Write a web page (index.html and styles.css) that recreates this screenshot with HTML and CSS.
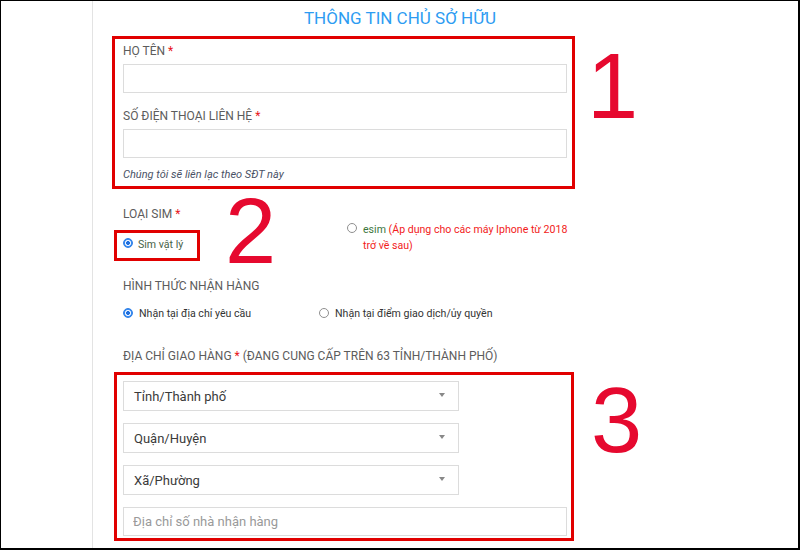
FILE: index.html
```html
<!DOCTYPE html>
<html lang="vi">
<head>
<meta charset="utf-8">
<title>Thông tin chủ sở hữu</title>
<link rel="stylesheet" href="styles.css">
</head>
<body>
<div class="frame">
  <aside class="side"></aside>
  <main class="main">
    <h1 class="title">THÔNG TIN CHỦ SỞ HỮU</h1>

    <div class="mark mark-1">
      <label class="label">HỌ TÊN <span class="req">*</span></label>
      <input class="input input-first" type="text">
      <label class="label label-gap">SỐ ĐIỆN THOẠI LIÊN HỆ <span class="req">*</span></label>
      <input class="input input-first" type="text">
      <p class="hint">Chúng tôi sẽ liên lạc theo SĐT này</p>
    </div>

    <div class="section">
      <div class="label">LOẠI SIM <span class="req">*</span></div>
    </div>
    <div class="sim-row">
      <div class="mark mark-2">
        <span class="radio checked"></span>
        <span class="opt opt-green">Sim vật lý</span>
      </div>
      <div class="esim">
        <span class="radio"></span>
        <p class="opt esim-text"><span class="green">esim</span> <span class="red">(Áp dụng cho các máy Iphone từ 2018 trở về sau)</span></p>
      </div>
    </div>

    <div class="section section-gap">
      <div class="label">HÌNH THỨC NHẬN HÀNG</div>
    </div>
    <div class="recv-row">
      <div class="recv">
        <span class="radio checked"></span>
        <span class="opt">Nhận tại địa chỉ yêu cầu</span>
      </div>
      <div class="recv">
        <span class="radio"></span>
        <span class="opt">Nhận tại điểm giao dịch/ủy quyền</span>
      </div>
    </div>

    <div class="section addr-label">
      <div class="label">ĐỊA CHỈ GIAO HÀNG <span class="req">*</span> (ĐANG CUNG CẤP TRÊN 63 TỈNH/THÀNH PHỐ)</div>
    </div>

    <div class="mark mark-3">
      <div class="select"><span>Tỉnh/Thành phố</span><i class="caret"></i></div>
      <div class="select"><span>Quận/Huyện</span><i class="caret"></i></div>
      <div class="select"><span>Xã/Phường</span><i class="caret"></i></div>
      <input class="input input-addr" type="text" placeholder="Địa chỉ số nhà nhận hàng">
    </div>
  </main>

  <span class="num num-1">1</span>
  <span class="num num-2">2</span>
  <span class="num num-3">3</span>
</div>
</body>
</html>
```

FILE: styles.css
```css
* { box-sizing: border-box; }

html, body {
  margin: 0;
  padding: 0;
  background: #fff;
}

body {
  font-family: Roboto, "Noto Sans", Arial, sans-serif;
  color: #333;
}

.frame {
  position: relative;
  width: 800px;
  height: 550px;
  border-style: solid;
  border-color: #000;
  border-width: 1px 2px 2px 1px;
  display: flex;
  overflow: hidden;
  background: #fff;
}

.side {
  width: 92px;
  flex: none;
  border-right: 1px solid #e3e3e3;
}

.main {
  flex: 1;
  padding: 7px 0 0 19px;
  display: flex;
  flex-direction: column;
  align-items: flex-start;
}

.title {
  width: 576px;
  margin: 0;
  text-align: center;
  font-size: 17px;
  line-height: 20px;
  font-weight: 400;
  color: #2d9cf2;
}

.mark {
  border: 3px solid #e10000;
}

.mark-1 {
  width: 463px;
  margin-top: 8px;
  padding: 4px 0 4px 8px;
  display: flex;
  flex-direction: column;
}

.label {
  display: block;
  font-size: 12px;
  line-height: 16px;
  color: #5c5c5c;
  text-transform: uppercase;
  white-space: nowrap;
}

.label-gap { margin-top: 15px; }

.req { color: #e8141b; }

.input {
  display: block;
  height: 29px;
  margin: 0;
  padding: 0 9px;
  border: 1px solid #dcdcdc;
  border-radius: 0;
  background: #fff;
  font-family: inherit;
  font-size: 13px;
  color: #333;
  outline: none;
}

.input-first {
  width: 444px;
  margin-top: 5px;
}

.input::placeholder { color: #9a9a9a; }

.hint {
  margin: 10px 0 0;
  font-size: 11px;
  line-height: 14px;
  font-style: italic;
  color: #4a5266;
}

.section {
  margin-top: 17px;
  padding-left: 11px;
}

.sim-row {
  display: grid;
  grid-template-columns: 235px auto;
  align-items: start;
}

.mark-2 {
  width: 86px;
  margin: 8px 0 0 2px;
  padding: 4px 0 5px 6px;
  display: flex;
  align-items: flex-start;
  gap: 5px;
}

.radio {
  flex: none;
  width: 10px;
  height: 10px;
  margin-top: 1px;
  border-radius: 50%;
  border: 1px solid #8f8f8f;
  background: #fff;
}

.radio.checked {
  border: 1px solid #2f7fe6;
  background: radial-gradient(circle, #1f6fde 0 1.6px, #eaf3ff 2.2px 2.8px, #3a8cf0 3.3px);
}

.opt {
  margin: 0;
  font-size: 10.6px;
  line-height: 16px;
  color: #333;
}

.opt-green { color: #475f47; }

.esim {
  display: flex;
  align-items: flex-start;
  gap: 6px;
}

.esim-text { width: 212px; }

.green { color: #3c763d; }
.red { color: #f21b1b; }

.recv-row {
  margin-top: 12px;
  padding-left: 11px;
  display: grid;
  grid-template-columns: 196px auto;
}

.recv {
  display: flex;
  align-items: flex-start;
  gap: 6px;
}

.recv .radio { margin-top: 2px; }

.addr-label { margin-top: 26px; }

.mark-3 {
  width: 460px;
  margin: 8px 0 0 2px;
  padding: 6px 0 2px 6px;
  display: flex;
  flex-direction: column;
  gap: 12px;
}

.select {
  width: 336px;
  height: 30px;
  border: 1px solid #dcdcdc;
  display: flex;
  align-items: center;
  justify-content: space-between;
  padding: 0 13px 0 10px;
  font-size: 13px;
  color: #3a3a3a;
}

.caret {
  width: 0;
  height: 0;
  border-left: 3px solid transparent;
  border-right: 3px solid transparent;
  border-top: 4px solid #888;
  margin-top: -2px;
}

.input-addr {
  width: 444px;
}

.num {
  position: absolute;
  font-family: "Liberation Sans", Arial, sans-serif;
  font-size: 92px;
  line-height: 92px;
  color: #e6092f;
}

.num-1 { left: 586px; top: 39px; }
.num-2 { left: 224px; top: 184px; }
.num-3 { left: 590px; top: 373px; }
```
